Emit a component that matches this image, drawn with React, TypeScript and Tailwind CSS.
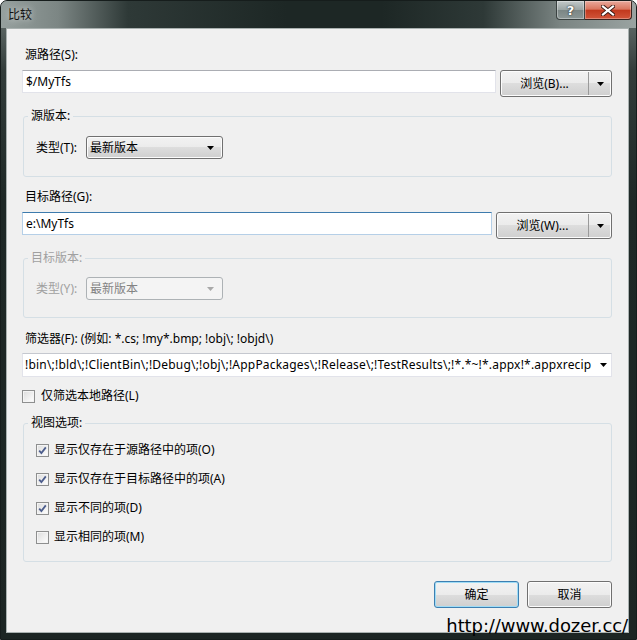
import React from 'react';

const font = "font-['Noto_Sans','Noto_Sans_CJK_SC',sans-serif]";

function Arrow({ color = '#000' }: { color?: string }) {
  return (
    <svg width="7" height="4" viewBox="0 0 7 4">
      <path d="M0 0H7L3.5 4Z" fill={color} />
    </svg>
  );
}

function TextBox({ value, focused }: { value: string; focused?: boolean }) {
  return (
    <div
      className={
        focused
          ? 'flex h-[23px] flex-1 items-center border border-[#b5cfe7] border-t-[#3d7bad] bg-white px-[3px]'
          : 'flex h-[23px] flex-1 items-center border border-[#e2e3ea] border-t-[#abadb3] bg-white px-[3px]'
      }
    >
      {value}
    </div>
  );
}

function SplitButton({ label, width }: { label: string; width: string }) {
  return (
    <div
      className={`flex h-[27px] ${width} rounded-[3px] border border-[#707070] bg-[linear-gradient(#f2f2f2_0%,#ebebeb_50%,#dddddd_50%,#cfcfcf_100%)] shadow-[inset_0_0_0_1px_#fcfcfc]`}
    >
      <div className="flex flex-1 items-center justify-center">{label}</div>
      <div className="my-[1px] w-px bg-[#9a9a9a]" />
      <div className="flex w-[22px] items-center justify-center">
        <Arrow />
      </div>
    </div>
  );
}

function Combo({ value, disabled }: { value: string; disabled?: boolean }) {
  return (
    <div
      className={
        disabled
          ? 'flex h-[23px] w-[137px] items-center justify-between rounded-[3px] border border-[#adb2b5] bg-[#f4f4f4] pl-[3px] pr-[8px] text-[#838383]'
          : 'flex h-[23px] w-[137px] items-center justify-between rounded-[3px] border border-[#707070] bg-[linear-gradient(#f2f2f2_0%,#ebebeb_50%,#dddddd_50%,#cfcfcf_100%)] pl-[3px] pr-[8px] shadow-[inset_0_0_0_1px_#fcfcfc]'
      }
    >
      <span>{value}</span>
      <Arrow color={disabled ? '#a9a9a9' : '#000'} />
    </div>
  );
}

function CheckBox({ checked, label }: { checked?: boolean; label: string }) {
  return (
    <div className="flex h-[16px] items-center">
      <div className="flex h-[13px] w-[13px] items-center justify-center border border-[#8e8f8f] bg-[linear-gradient(135deg,#dcdcdc,#ffffff)] shadow-[inset_0_0_0_1px_#f4f4f4]">
        {checked && (
          <svg width="9" height="9" viewBox="0 0 9 9">
            <path d="M1.2 4.6L3.4 7L7.8 1.4" fill="none" stroke="#4c5d8c" strokeWidth="1.8" />
          </svg>
        )}
      </div>
      <span className="ml-[5px] leading-[16px]">{label}</span>
    </div>
  );
}

function Group({ legend, disabled, children, className }: { legend: string; disabled?: boolean; children: React.ReactNode; className?: string }) {
  return (
    <fieldset className={`ml-[1px] min-w-0 rounded-[3px] border border-[#d5dfe5] ${className ?? ''}`}>
      <legend className={`ml-[4px] px-[3px] leading-[16px] ${disabled ? 'text-[#a0a0a0]' : ''}`}>{legend}</legend>
      {children}
    </fieldset>
  );
}

function Button({ label, primary }: { label: string; primary?: boolean }) {
  return (
    <div
      className={
        primary
          ? 'flex h-[27px] w-[85px] items-center justify-center rounded-[3px] border border-[#3c7fb1] bg-[linear-gradient(#f2f2f2_0%,#ebebeb_50%,#dddddd_50%,#cfcfcf_100%)] shadow-[inset_0_0_0_1px_#9fdcf6]'
          : 'flex h-[27px] w-[85px] items-center justify-center rounded-[3px] border border-[#707070] bg-[linear-gradient(#f2f2f2_0%,#ebebeb_50%,#dddddd_50%,#cfcfcf_100%)] shadow-[inset_0_0_0_1px_#fcfcfc]'
      }
    >
      {label}
    </div>
  );
}

export default function App() {
  return (
    <div
      className={`${font} relative flex h-[640px] w-[637px] flex-col overflow-hidden rounded-t-[7px] border border-[#161d1c] bg-[linear-gradient(#707a78_0px,#323c3a_70px,#1e2826_200px,#1c2523_100%)] text-[12px] text-black`}
    >
      {/* Title bar */}
      <div className="flex h-[27px] items-start bg-[linear-gradient(to_right,#96a09e_0%,#7c8684_9%,#2e3937_20%,#1d2725_45%,#1d2725_60%,#2e3937_76%,#7a8482_88%,#9aa3a1_100%)]">
        <span className="ml-[7px] mt-[6px] leading-[16px] text-[#111] [text-shadow:0_0_6px_rgba(255,255,255,0.8)]">比较</span>
        <div className="ml-auto mr-[4px] flex">
          <div className="flex h-[19px] w-[29px] items-center justify-center rounded-bl-[4px] border border-t-0 border-[#3a4241] bg-[linear-gradient(#c2c9c9_0%,#9aa4a3_50%,#7b8685_51%,#8c9796_100%)] shadow-[inset_0_0_0_1px_rgba(255,255,255,0.35)]">
            <span className="font-['DejaVu_Sans',sans-serif] text-[13px] font-bold leading-none text-white [text-shadow:0_0_1px_#2a3130,0_0_2px_#2a3130]">?</span>
          </div>
          <div className="flex h-[19px] w-[47px] items-center justify-center rounded-br-[4px] border border-l-0 border-t-0 border-[#3a2420] bg-[linear-gradient(#e9a99c_0%,#d9765f_45%,#c2391e_52%,#d2553a_100%)] shadow-[inset_0_0_0_1px_rgba(255,255,255,0.3)]">
            <svg width="14" height="11" viewBox="0 0 14 11">
              <path d="M2 1.5L12 9.5M12 1.5L2 9.5" stroke="#3b1a14" strokeWidth="4" strokeLinecap="square" />
              <path d="M2 1.5L12 9.5M12 1.5L2 9.5" stroke="#ffffff" strokeWidth="2.2" strokeLinecap="square" />
            </svg>
          </div>
        </div>
      </div>

      {/* Body */}
      <div className="flex min-w-0 flex-1 pb-[6px] pl-[5px] pr-[7px]">
        <div className="flex min-w-0 flex-1 flex-col border border-[#a9b1b0] bg-[#f0f0f0] pl-[15px] pr-[16px] pt-[18px]">
          <div className="ml-[3px] leading-[16px]">源路径(S):</div>
          <div className="mt-[7px] flex items-start gap-[4px]">
            <TextBox value="$/MyTfs" />
            <SplitButton label="浏览(B)..." width="w-[112px]" />
          </div>

          <Group legend="源版本:" className="mt-[11px]">
            <div className="flex items-center pb-[17px] pl-[12px] pt-[12px]">
              <span className="w-[50px]">类型(T):</span>
              <Combo value="最新版本" />
            </div>
          </Group>

          <div className="ml-[3px] mt-[12px] leading-[16px]">目标路径(G):</div>
          <div className="mt-[7px] flex items-start gap-[4px]">
            <TextBox value="e:\MyTfs" focused />
            <SplitButton label="浏览(W)..." width="w-[116px]" />
          </div>

          <Group legend="目标版本:" disabled className="mt-[11px]">
            <div className="flex items-center pb-[17px] pl-[12px] pt-[11px]">
              <span className="w-[50px] text-[#a0a0a0]">类型(Y):</span>
              <Combo value="最新版本" disabled />
            </div>
          </Group>

          <div className="ml-[3px] mt-[13px] leading-[16px]">筛选器(F): (例如: *.cs; !my*.bmp; !obj\; !objd\)</div>
          <div className="mt-[6px] flex h-[24px] min-w-0 items-center border border-[#e2e3ea] border-t-[#c5c8cf] bg-white pl-[2px] pr-[4px]">
            <span className="min-w-0 flex-1 overflow-hidden whitespace-nowrap tracking-[0.2px]">
              !bin\;!bld\;!ClientBin\;!Debug\;!obj\;!AppPackages\;!Release\;!TestResults\;!*.*~!*.appx!*.appxrecip
            </span>
            <span className="ml-[6px]">
              <Arrow />
            </span>
          </div>

          <div className="mt-[11px] flex h-[16px] items-center">
            <div className="h-[13px] w-[13px] border border-[#8e8f8f] bg-[linear-gradient(135deg,#dcdcdc,#ffffff)] shadow-[inset_0_0_0_1px_#f4f4f4]" />
            <span className="ml-[6px]">仅筛选本地路径(L)</span>
          </div>

          <Group legend="视图选项:" className="mt-[11px]">
            <div className="flex flex-col gap-[13px] pb-[16px] pl-[12px] pt-[11px]">
              <CheckBox checked label="显示仅存在于源路径中的项(O)" />
              <CheckBox checked label="显示仅存在于目标路径中的项(A)" />
              <CheckBox checked label="显示不同的项(D)" />
              <CheckBox label="显示相同的项(M)" />
            </div>
          </Group>

          <div className="mt-[19px] flex justify-end gap-[8px]">
            <Button label="确定" primary />
            <Button label="取消" />
          </div>
        </div>
      </div>

      {/* Watermark */}
      <div className="absolute bottom-[3px] right-[8px] font-['DejaVu_Sans',sans-serif] text-[18px] leading-[20px] tracking-[-0.1px] text-black">
        http://www.dozer.cc/
      </div>
    </div>
  );
}
